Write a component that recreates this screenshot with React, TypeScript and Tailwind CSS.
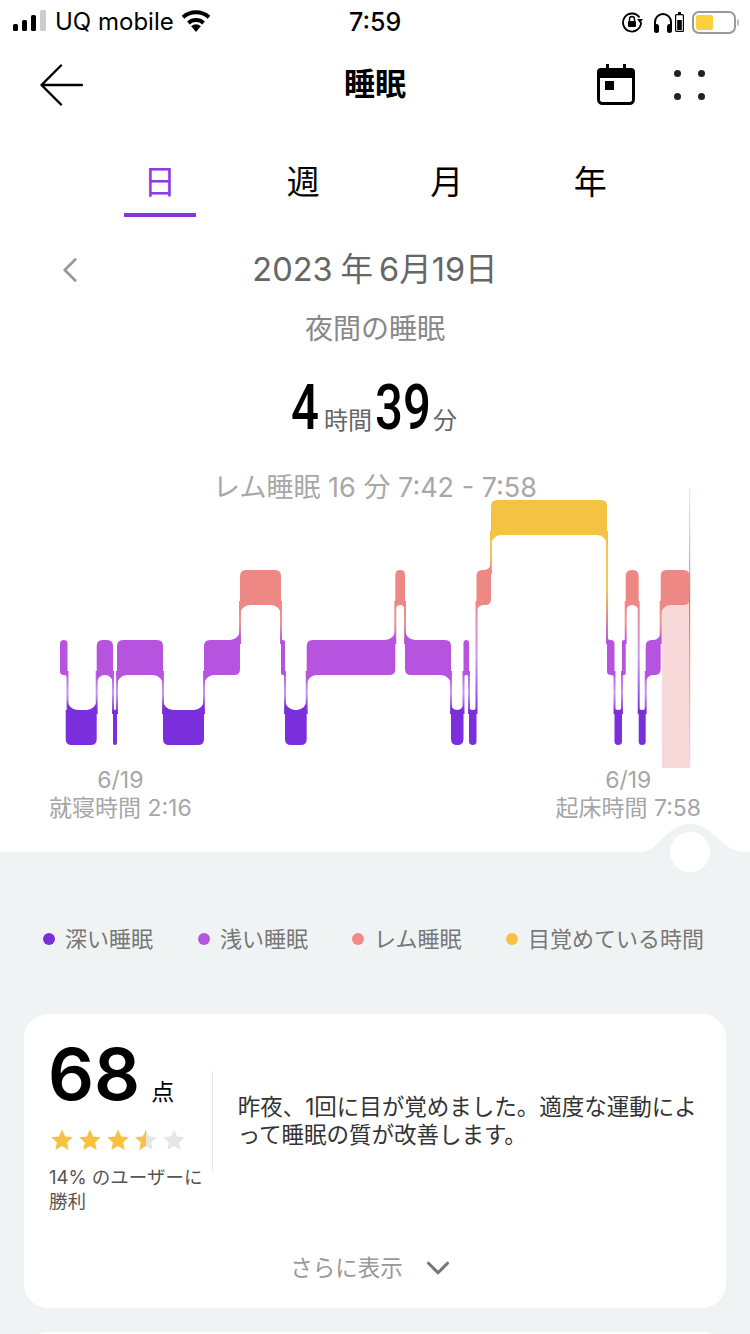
import React from "react";
import { ChevronDown, ChevronLeft } from "lucide-react";

// x1, x2, level (0 awake, 1 rem, 2 light, 3 deep)
const segments: [number, number, number][] = [
  [60, 67.5, 2], [65.7, 96.7, 3], [96.7, 113, 2], [113, 117, 3], [117, 163, 2],
  [163, 204, 3], [204, 240, 2], [240, 281, 1], [281, 285, 2], [285, 306.7, 3],
  [306.7, 395.3, 2], [395.3, 405, 1], [405, 451, 2], [451, 463.5, 3], [463.5, 469, 2],
  [469, 476.5, 3], [476.5, 491, 1], [491, 607, 0], [607, 614.5, 2], [614.5, 622, 3],
  [622, 625.7, 2], [625.7, 638.7, 1], [638.7, 645.7, 3], [645.7, 660.7, 2], [660.7, 689.5, 1],
];
const tops = [500, 570, 640, 710];
const colors = ["#f5c344", "#ee8884", "#b654e0", "#7b2edb"];
const H = 35;

const blockPath = (i: number) => {
  const [a, b, lv] = segments[i];
  const prev = segments[i - 1]?.[2];
  const next = segments[i + 1]?.[2];
  const t = tops[lv];
  const y2 = t + H;
  const r = Math.min(6, (b - a) / 2);
  const tl = prev !== undefined && prev < lv ? 0 : r;
  const bl = prev !== undefined && prev > lv ? 0 : r;
  const tr = next !== undefined && next < lv ? 0 : r;
  const br = next !== undefined && next > lv ? 0 : r;
  return `M${a + tl} ${t}L${b - tr} ${t}Q${b} ${t} ${b} ${t + tr}L${b} ${y2 - br}Q${b} ${y2} ${b - br} ${y2}L${a + bl} ${y2}Q${a} ${y2} ${a} ${y2 - bl}L${a} ${t + tl}Q${a} ${t} ${a + tl} ${t}Z`;
};

const SleepChart = () => {
  const joins = segments.slice(0, -1).map((s, i) => {
    const n = segments[i + 1];
    const leftUpper = s[2] < n[2];
    const upper = leftUpper ? s : n;
    const lower = leftUpper ? n : s;
    return {
      x: s[1],
      upper,
      lower,
      dir: leftUpper ? -1 : 1,
      ru: Math.min(10, (upper[1] - upper[0]) / 2),
      rl: Math.min(10, (lower[1] - lower[0]) / 2),
      ub: tops[upper[2]] + H,
      lt: tops[lower[2]],
    };
  });

  return (
    <svg viewBox="0 488 750 280" className="block w-[750px] h-[280px]">
      <defs>
        {[0, 1, 2].map((a) =>
          [1, 2, 3].filter((b) => b > a).map((b) => (
            <linearGradient key={`${a}${b}`} id={`g${a}${b}`} x1="0" y1="0" x2="0" y2="1">
              <stop offset="0" stopColor={colors[a]} />
              <stop offset="0.5" stopColor={b === 3 ? "#c48cf0" : colors[a]} stopOpacity="0.9" />
              <stop offset="1" stopColor={colors[b]} />
            </linearGradient>
          ))
        )}
        <linearGradient id="cursor" x1="0" y1="0" x2="0" y2="1">
          <stop offset="0" stopColor="#f4b6bb" stopOpacity="0.4" />
          <stop offset="0.4" stopColor="#ee6f78" />
          <stop offset="1" stopColor="#f7d9da" />
        </linearGradient>
      </defs>
      <rect x="662" y="600" width="27" height="168" fill="#f7d9da" />
      {joins.map((j, i) => (
        <g key={i}>
          <rect
            x={j.x - 1}
            y={j.ub - 4}
            width="2"
            height={j.lt - j.ub + 8}
            fill={`url(#g${j.upper[2]}${j.lower[2]})`}
          />
          <path
            d={`M${j.x} ${j.ub}L${j.x + j.dir * j.ru} ${j.ub}A${j.ru} ${j.ru} 0 0 ${j.dir > 0 ? 0 : 1} ${j.x} ${j.ub + j.ru}Z`}
            fill={colors[j.upper[2]]}
          />
          <path
            d={`M${j.x} ${j.lt}L${j.x - j.dir * j.rl} ${j.lt}A${j.rl} ${j.rl} 0 0 ${j.dir > 0 ? 0 : 1} ${j.x} ${j.lt - j.rl}Z`}
            fill={colors[j.lower[2]]}
          />
        </g>
      ))}
      {segments.map((s, i) => (
        <path key={i} d={blockPath(i)} fill={colors[s[2]]} />
      ))}
      <rect x="689" y="488" width="1.2" height="280" fill="url(#cursor)" />
    </svg>
  );
};

const StatusBar = () => (
  <div className="flex items-center h-[44px] pl-[13px] pr-[11px] text-black">
    <svg width="34" height="22" viewBox="0 0 34 22" className="mt-[-2px]">
      <rect x="0" y="14" width="5" height="7" rx="1.5" fill="#000" />
      <rect x="9" y="10" width="5" height="11" rx="1.5" fill="#000" />
      <rect x="18" y="5" width="5" height="16" rx="1.5" fill="#000" />
      <rect x="27" y="0" width="6" height="21" rx="1.5" fill="#cccccc" />
    </svg>
    <span className="ml-[8px] text-[24px] leading-none">UQ mobile</span>
    <svg width="30" height="22" viewBox="0 0 30 22" className="ml-[7px] mt-[-2px]">
      <path d="M15 22 10.2 16.2a7 7 0 0 1 9.6 0Z" fill="#000" />
      <path d="M7.4 13a11.4 11.4 0 0 1 15.2 0" fill="none" stroke="#000" strokeWidth="4" />
      <path d="M2 7.2a19.4 19.4 0 0 1 26 0" fill="none" stroke="#000" strokeWidth="4" />
    </svg>
    <span className="absolute left-[349px] text-[25px] font-medium leading-none">7:59</span>
    <div className="ml-auto flex items-center">
      <svg width="22" height="22" viewBox="0 0 22 22">
        <path d="M18.5 6.5A9 9 0 1 0 20 11" fill="none" stroke="#000" strokeWidth="1.8" />
        <path d="M16 8h6l-3 4Z" fill="#000" />
        <rect x="7" y="10" width="8" height="6" rx="1" fill="#000" />
        <path d="M8.5 10V8a2.5 2.5 0 0 1 5 0v2" fill="none" stroke="#000" strokeWidth="1.4" />
      </svg>
      <svg width="20" height="21" viewBox="0 0 20 21" className="ml-[10px]">
        <path d="M2 14V10a8 8 0 0 1 16 0v4" fill="none" stroke="#000" strokeWidth="2" />
        <rect x="1" y="12" width="5" height="9" rx="2.5" fill="#000" />
        <rect x="14" y="12" width="5" height="9" rx="2.5" fill="#000" />
      </svg>
      <svg width="9" height="20" viewBox="0 0 9 20" className="ml-[2px]">
        <rect x="3" y="0" width="3" height="2" fill="#000" />
        <rect x="0.6" y="2.6" width="7.8" height="16.8" rx="1" fill="none" stroke="#000" strokeWidth="1.2" />
        <rect x="2.2" y="8" width="4.6" height="10" fill="#000" />
      </svg>
      <div className="ml-[8px] w-[44px] h-[23px] rounded-[7px] border-2 border-[#999999] p-[2px] flex">
        <div className="w-[17px] h-full rounded-[2px] bg-[#fbd23e]" />
      </div>
      <div className="ml-[1px] w-[2px] h-[7px] rounded-r-full bg-[#bbbbbb]" />
    </div>
  </div>
);

const NavBar = () => (
  <div className="flex items-center h-[81px] pl-[40px] pr-[45px]">
    <svg width="43" height="42" viewBox="0 0 43 42">
      <path d="M42 21H2M21 1.5 1.5 21 21 40.5" fill="none" stroke="#000" strokeWidth="2.4" strokeLinecap="round" strokeLinejoin="round" />
    </svg>
    <div className="absolute left-0 w-[750px] text-center text-[31px] font-bold text-black pointer-events-none">睡眠</div>
    <div className="ml-auto flex items-center gap-[39px]">
      <svg width="38" height="41" viewBox="0 0 38 41">
        <path d="M9 0h3v5H9ZM26 0h3v5h-3Z" fill="#000" />
        <path d="M4 4h30a4 4 0 0 1 4 4v6H0V8a4 4 0 0 1 4-4Z" fill="#000" />
        <rect x="1.5" y="6" width="35" height="33.5" rx="4" fill="none" stroke="#000" strokeWidth="3" />
        <rect x="8" y="17" width="9" height="9" fill="#000" />
      </svg>
      <div className="grid grid-cols-2 gap-x-[17px] gap-y-[16px]">
        <div className="w-[7px] h-[7px] rounded-full bg-[#222222]" />
        <div className="w-[7px] h-[7px] rounded-full bg-[#222222]" />
        <div className="w-[7px] h-[7px] rounded-full bg-[#222222]" />
        <div className="w-[7px] h-[7px] rounded-full bg-[#222222]" />
      </div>
    </div>
  </div>
);

const Tabs = () => (
  <div className="grid grid-cols-4 mx-[88px] w-[574px] mt-[25px] h-[67px]">
    {["日", "週", "月", "年"].map((t, i) => (
      <div key={t} className="flex flex-col items-center pt-[7px]">
        <span className={`text-[33px] leading-[50px] ${i === 0 ? "text-[#8a3fdd]" : "text-black"}`}>{t}</span>
        {i === 0 && <div className="w-[72px] h-[4px] mt-[6px] bg-[#8338d8]" />}
      </div>
    ))}
  </div>
);

const Star = ({ color }: { color: string }) => (
  <svg width="24" height="24" viewBox="0 0 24 24">
    <path d="M12 1.5l3.2 7 7.6.8-5.7 5.1 1.6 7.5L12 18.1l-6.7 3.8 1.6-7.5L1.2 9.3l7.6-.8Z" fill={color} />
  </svg>
);

const legend = [
  ["深い睡眠", "#7b2edb", "ml-[19px] w-[155px]"],
  ["浅い睡眠", "#b654e0", "w-[154px]"],
  ["レム睡眠", "#f08a88", "w-[154px]"],
  ["目覚めている時間", "#f5c344", "w-[195px]"],
];

const bigDigit = "inline-block origin-left scale-x-[0.78] text-[63px] leading-[45px] font-medium text-black [font-family:Roboto,sans-serif]";

export default function App() {
  return (
    <div className="relative w-[750px] h-[1334px] overflow-hidden bg-white [font-family:Inter,'Noto_Sans_CJK_JP',sans-serif]">
      <StatusBar />
      <NavBar />
      <Tabs />

      <div className="grid grid-cols-[1fr_auto_1fr] items-center mt-[30px] h-[46px]">
        <ChevronLeft size={42} strokeWidth={1.6} className="ml-[49px] text-[#999999]" />
        <span className="text-[32.5px] leading-none text-[#666666]">
          2023<span className="ml-[8px]">年</span><span className="ml-[6px]">6月19日</span>
        </span>
        <span />
      </div>
      <div className="text-center text-[28px] leading-[38px] text-[#888888] mt-[17px]">夜間の睡眠</div>
      <div className="flex items-baseline justify-center h-[45px] mt-[37px]">
        <span className={`${bigDigit} w-[33px] ml-[-2px]`}>4</span>
        <span className="text-[24px] text-[#666666]">時間</span>
        <span className={`${bigDigit} w-[58px] ml-[3px]`}>39</span>
        <span className="text-[24px] text-[#666666]">分</span>
      </div>

      <div className="relative mt-[58px]">
        <div className="absolute left-0 top-[-17px] w-[750px] text-center text-[27px] leading-[34px] text-[#a8a8a8]">
          レム睡眠 16 分 7:42 - 7:58
        </div>
        <SleepChart />
      </div>

      <div className="flex justify-between px-[49px] mt-[-2px] text-[23px] leading-[28px] text-[#a6a6a6] h-[86px]">
        <div className="text-center">
          <div>6/19</div>
          <div>就寝時間 2:16</div>
        </div>
        <div className="text-center">
          <div>6/19</div>
          <div>起床時間 7:58</div>
        </div>
      </div>

      <div className="relative bg-[#f0f3f4] h-[482px] px-[24px]">
        <svg width="114" height="30" viewBox="0 0 114 30" className="absolute right-0 top-[-29px]">
          <path d="M0 30C24 30 29 1 54 1S84 30 114 30Z" fill="#f0f3f4" />
        </svg>
        <div className="absolute left-[670px] top-[-20px] w-[40px] h-[40px] rounded-full bg-white" />

        <div className="flex pt-[73px] h-[162px]">
          {legend.map(([label, color, width]) => (
            <div key={label} className={`flex items-center h-[28px] shrink-0 ${width}`}>
              <span className="w-[12px] h-[12px] shrink-0 rounded-full mr-[10px]" style={{ backgroundColor: color }} />
              <span className="text-[22px] leading-none whitespace-nowrap text-[#777777]">{label}</span>
            </div>
          ))}
        </div>

        <div className="rounded-[24px] bg-white h-[294px] px-[25px] pt-[22px] flex flex-col">
          <div className="flex">
            <div className="w-[163px] shrink-0">
              <div className="flex items-baseline ml-[-1px]">
                <span className="text-[72px] leading-[76px] font-semibold text-black">68</span>
                <span className="ml-[11px] text-[23px] text-black">点</span>
              </div>
              <div className="flex mt-[16px] ml-[1px] gap-[4px]">
                <Star color="#f5c242" />
                <Star color="#f5c242" />
                <Star color="#f5c242" />
                <div className="relative w-[24px] h-[24px]">
                  <Star color="#e6e6e6" />
                  <div className="absolute top-0 left-0 w-[12px] h-[24px] overflow-hidden">
                    <Star color="#f5c242" />
                  </div>
                </div>
                <Star color="#e6e6e6" />
              </div>
              <div className="mt-[13px] text-[18.5px] leading-[24px] text-[#555555]">14% のユーザーに勝利</div>
            </div>
            <div className="w-[1px] h-[100px] mt-[35px] bg-[#e4e4e4]" />
            <div className="ml-[25px] mt-[57px] text-[22.5px] leading-[28px] text-[#333333]">
              昨夜、1回に目が覚めました。適度な運動によって睡眠の質が改善します。
            </div>
          </div>
          <div className="flex items-center justify-center mt-auto mb-[21px] text-[22.5px] leading-none text-[#999999]">
            さらに表示
            <ChevronDown size={38} strokeWidth={2} className="ml-[16px] mr-[3px] text-[#777777]" />
          </div>
        </div>
        <div className="mt-[24px] h-[40px] rounded-t-[24px] bg-white" />
      </div>
    </div>
  );
}
